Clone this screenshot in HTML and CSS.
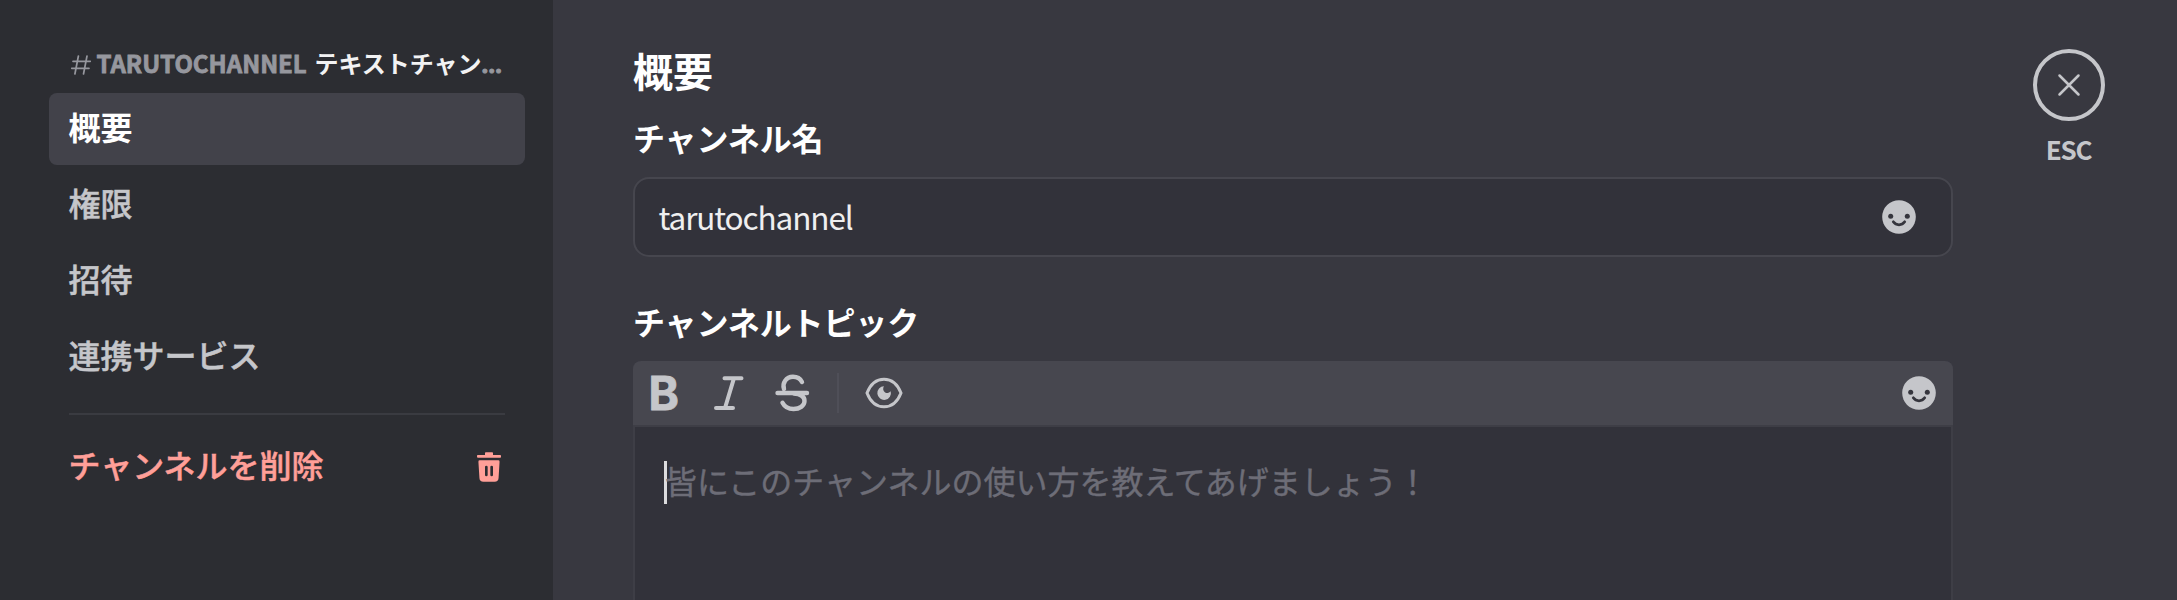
FILE: index.html
```
<!DOCTYPE html>
<html lang="ja">
  <head>
    <meta charset="UTF-8" />
    <meta name="viewport" content="width=device-width, initial-scale=1.0" />
    <title>チャンネル設定</title>
    <link rel="stylesheet" href="styles.css">
  </head>

  <body>
    <!-- sidebar -->
    <nav class="sidebar">
      <div class="side-title">
        <svg class="hash" viewBox="0 0 20 20"><path d="M7.4 1L3.9 19M16 1l-3.500 18M2 6.300h17.300M.7 13.300H18" /></svg>
        <span class="name">TARUTOCHANNEL</span>
        <span class="kind">テキストチャン<span class="dots">…</span></span>
      </div>
      <a class="item active">概要</a>
      <a class="item">権限</a>
      <a class="item">招待</a>
      <a class="item">連携サービス</a>
      <hr class="divider" />
      <a class="item danger">
        チャンネルを削除
        <svg class="trash" viewBox="0 0 24 24">
          <path d="M14.250 1c.41 0 .75.34.75.75V3h5.250c.41 0 .75.34.75.75v.5c0 .41-.34.75-.75.75H3.750A.75.75 0 0 1 3 4.250v-.5c0-.41.34-.75.75-.75H9V1.750c0-.41.34-.75.75-.75h4.500Z" />
          <path fill-rule="evenodd" d="M5.060 7a1 1 0 0 0-1 1.060l.76 12.130a3 3 0 0 0 3 2.810h8.360a3 3 0 0 0 3-2.810l.75-12.130a1 1 0 0 0-1-1.060H5.070ZM11 12a1 1 0 1 0-2 0v6a1 1 0 1 0 2 0v-6Zm3-1a1 1 0 0 1 1 1v6a1 1 0 1 1-2 0v-6a1 1 0 0 1 1-1Z" />
        </svg>
      </a>
    </nav>

    <!-- settings -->
    <main class="content">
      <h1>概要</h1>
      <h2>チャンネル名</h2>
      <div class="field">
        <span class="value">tarutochannel</span>
        <svg class="emoji" viewBox="0 0 40 40">
          <circle cx="20" cy="20" r="16.800" />
          <circle class="eye-dot" cx="11.700" cy="19.300" r="2.500" />
          <circle class="eye-dot" cx="28.300" cy="19.300" r="2.500" />
          <path class="smile" d="M14.300 24.800c2.800 4 8.600 4 11.400 0" />
        </svg>
      </div>

      <h2 class="topic">チャンネルトピック</h2>
      <div class="editor">
        <div class="toolbar">
          <span class="bold">B</span>
          <svg class="tool italic" viewBox="0 0 40 40"><path d="M15.500 5.200h17M7 35h17M25 5.200L16 35" /></svg>
          <svg class="tool strike" viewBox="0 0 40 40">
            <path d="M12 16c-2-6 2-12.200 9-12.200 4.300 0 7.300 2 9 5.200M22 20.500c7 .5 10.500 3.500 10.500 7.500 0 5-5 8-11 8-5.200 0-9-2.300-11-6.200" />
            <path d="M5.500 20h29.500" />
          </svg>
          <span class="sep"></span>
          <svg class="tool preview" viewBox="0 0 40 40">
            <path d="M3 20C6.500 11 13 6.200 20 6.200S33.500 11 37 20C33.500 29 27 33.800 20 33.800S6.500 29 3 20Z" />
            <path class="pupil" d="M20 13.300a3.700 3.700 0 0 0 6.700 5 6.800 6.800 0 1 1-6.700-5Z" />
          </svg>
          <svg class="emoji" viewBox="0 0 40 40">
            <circle cx="20" cy="20" r="16.800" />
            <circle class="eye-dot" cx="11.700" cy="19.300" r="2.500" />
            <circle class="eye-dot" cx="28.300" cy="19.300" r="2.500" />
            <path class="smile" d="M14.300 24.800c2.800 4 8.600 4 11.400 0" />
          </svg>
        </div>
        <div class="textarea">
          <span class="caret"></span><span class="placeholder">皆にこのチャンネルの使い方を教えてあげましょう！</span>
        </div>
      </div>
    </main>

    <div class="close">
      <div class="ring">
        <svg viewBox="0 0 24 24"><path d="M2.500 2.500l19 19M21.500 2.500l-19 19" /></svg>
      </div>
      <span class="esc">ESC</span>
    </div>
  </body>
</html>
```
FILE: styles.css
```
* {
  margin: 0;
  padding: 0;
  box-sizing: border-box;
}

body {
  height: 100vh;
  display: flex;
  overflow: hidden;
  background-color: #383840;
  color: #fff;
  font-family: "Noto Sans CJK JP", sans-serif;
  font-size: 32px;
}

.sidebar {
  width: 553px;
  height: 100%;
  padding: 36px 28px 0 48.5px;
  background-color: #2c2d32;
}

.side-title {
  height: 57px;
  padding: 0 20px;
  display: flex;
  align-items: center;
  font-size: 24px;
  font-weight: 700;
  line-height: 36px;
  white-space: nowrap;
}

.hash {
  width: 20px;
  height: 20px;
  margin: 1px 6px 0 2px;
  fill: none;
  stroke: #96979e;
  stroke-width: 1.7;
  stroke-linecap: round;
}

.name {
  width: 210px;
  margin: -3px 8px 0 0;
  color: #96979e;
  -webkit-text-stroke: 0.8px #96979e;
}

.kind {
  margin-top: -3px;
  color: #f2f2f3;
}

.dots {
  color: #96979e;
  font-family: "Noto Sans", sans-serif;
  -webkit-text-stroke: 1px #96979e;
}

.item {
  height: 72px;
  margin-bottom: 4px;
  padding: 0 20px 7px;
  display: flex;
  align-items: center;
  justify-content: space-between;
  border-radius: 8px;
  color: #c5c6ca;
  font-weight: 500;
  -webkit-text-stroke: 0.5px;
}

.active {
  background-color: #42424a;
  color: #fff;
  font-weight: 600;
  -webkit-text-stroke: 0;
}

.divider {
  height: 2px;
  margin: 20px 20px 16px;
  border: none;
  background-color: #3a3b41;
}

.danger {
  color: #ff9f98;
}

.trash {
  width: 32px;
  height: 32px;
  margin-top: 7px;
  fill: #ff9f98;
}

.content {
  width: 1320px;
  flex-shrink: 0;
  margin-left: 80px;
  padding-top: 40px;
}

h1 {
  height: 60px;
  font-size: 40px;
  font-weight: 700;
  line-height: 60px;
}

h2 {
  height: 48px;
  margin: 14px 0 15px;
  font-size: 32px;
  font-weight: 600;
  line-height: 47px;
  letter-spacing: -0.1px;
}

.field {
  height: 80px;
  padding: 0 32px 0 23.5px;
  display: flex;
  align-items: center;
  justify-content: space-between;
  background-color: #32323a;
  border: 2px solid #46464e;
  border-radius: 16px;
}

.value {
  margin-top: -2px;
  color: #efeff0;
  font-size: 31.5px;
  letter-spacing: -1.1px;
}

.emoji {
  width: 40px;
  height: 40px;
  fill: #c5c6ca;
}

.eye-dot {
  fill: #35353d;
}

.smile {
  fill: none;
  stroke: #35353d;
  stroke-width: 2.8;
  stroke-linecap: round;
}

.topic {
  margin: 41px 0 15px;
}

.editor {
  height: 239px;
  background-color: #32323a;
  border: 2px solid #3e3e46;
  border-top: none;
  border-bottom: none;
  border-radius: 8px 8px 0 0;
}

.toolbar {
  height: 66px;
  margin: 0 -2px;
  padding: 0 14px 0 15.5px;
  display: flex;
  align-items: center;
  background-color: #47474f;
  border-bottom: 2px solid #3e3e46;
  border-radius: 8px 8px 0 0;
}

.bold {
  width: 32px;
  color: #c5c6ca;
  font-family: Inter, sans-serif;
  font-size: 46px;
  font-weight: 700;
  line-height: 64px;
  -webkit-text-stroke: 0.8px #c5c6ca;
}

.tool {
  width: 40px;
  height: 40px;
  fill: none;
  stroke: #c5c6ca;
  stroke-width: 4;
  stroke-linecap: round;
}

.italic {
  margin-left: 28px;
}

.strike {
  margin-left: 23px;
  stroke-width: 4.4;
}

.sep {
  width: 2px;
  height: 40px;
  margin: 0 25px;
  background-color: #4f4f58;
}

.preview {
  stroke-width: 3;
}

.pupil {
  fill: #c5c6ca;
  stroke: none;
}

.toolbar .emoji {
  margin-left: auto;
}

.textarea {
  padding: 34px 29px;
  display: flex;
}

.caret {
  width: 3px;
  height: 43px;
  margin-right: -2px;
  background-color: #dcdcde;
}

.placeholder {
  color: #6d6d77;
  line-height: 39px;
  -webkit-text-stroke: 0.4px #6d6d77;
}

.close {
  width: 72px;
  margin: 49px 0 0 79.5px;
  display: flex;
  flex-direction: column;
  align-items: center;
}

.ring {
  width: 72px;
  height: 72px;
  display: flex;
  align-items: center;
  justify-content: center;
  border: 4px solid #c5c6ca;
  border-radius: 50%;
}

.ring svg {
  width: 24px;
  height: 24px;
  fill: none;
  stroke: #c5c6ca;
  stroke-width: 2.5;
  stroke-linecap: round;
}

.esc {
  margin-top: 9px;
  color: #c5c6ca;
  font-size: 26px;
  font-weight: 600;
  line-height: 37px;
  letter-spacing: -1.2px;
}
```
